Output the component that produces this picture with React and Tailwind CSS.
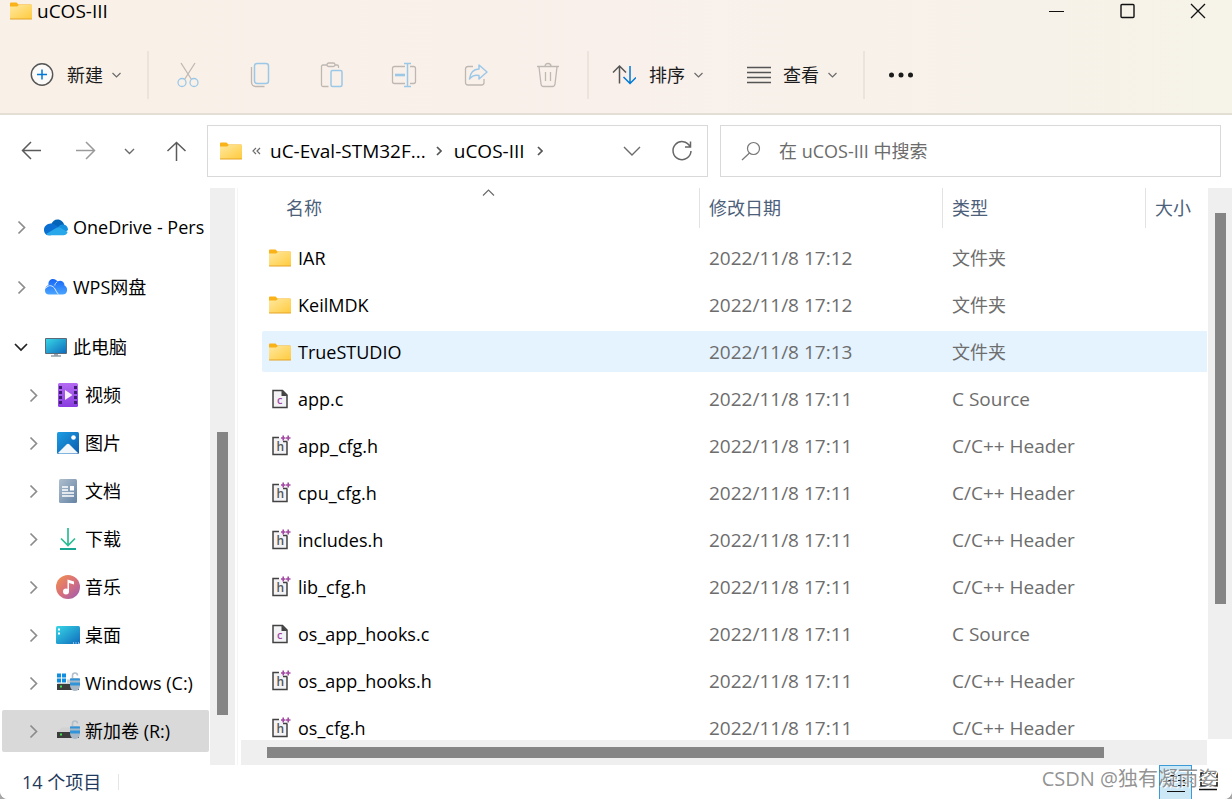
import React from "react";

const places = [
  { name: "视频", icon: VideoIcon },
  { name: "图片", icon: PictureIcon },
  { name: "文档", icon: DocumentIcon },
  { name: "下载", icon: DownloadIcon },
  { name: "音乐", icon: MusicIcon },
  { name: "桌面", icon: DesktopIcon },
  { name: "Windows (C:)", icon: SystemDriveIcon },
  { name: "新加卷 (R:)", icon: DriveIcon, selected: true },
];

const files = [
  { name: "IAR", date: "2022/11/8 17:12", type: "folder" },
  { name: "KeilMDK", date: "2022/11/8 17:12", type: "folder" },
  { name: "TrueSTUDIO", date: "2022/11/8 17:13", type: "folder", active: true },
  { name: "app.c", date: "2022/11/8 17:11", type: "c" },
  { name: "app_cfg.h", date: "2022/11/8 17:11", type: "h" },
  { name: "cpu_cfg.h", date: "2022/11/8 17:11", type: "h" },
  { name: "includes.h", date: "2022/11/8 17:11", type: "h" },
  { name: "lib_cfg.h", date: "2022/11/8 17:11", type: "h" },
  { name: "os_app_hooks.c", date: "2022/11/8 17:11", type: "c" },
  { name: "os_app_hooks.h", date: "2022/11/8 17:11", type: "h" },
  { name: "os_cfg.h", date: "2022/11/8 17:11", type: "h" },
];

const types = {
  folder: { label: "文件夹", icon: FolderIcon, size: "text-[18px]" },
  c: { label: "C Source", icon: CFileIcon, size: "text-[19px]" },
  h: { label: "C/C++ Header", icon: HFileIcon, size: "text-[19px]" },
};

/* ---------- icons ---------- */

function FolderIcon() {
  return (
    <svg width="22" height="18" viewBox="0 0 22 18" className="shrink-0">
      <defs>
        <linearGradient id="folder" x1="0" y1="0" x2="1" y2="1">
          <stop offset="0" stopColor="#ffe8a0" />
          <stop offset="1" stopColor="#ffcb3d" />
        </linearGradient>
      </defs>
      <path d="M0 1.5Q0 .5 1 .5H6.5L8.5 2.5H21Q22 2.5 22 3.5V8H0Z" fill="#f9b218" />
      <path d="M0 4.5H7L9 3H21.5Q22 3 22 3.5V17H0Z" fill="url(#folder)" />
      <path d="M0 16.5H22V17Q22 17.5 21 17.5H1Q0 17.5 0 17Z" fill="#e5a326" />
    </svg>
  );
}

function CFileIcon() {
  return (
    <svg width="22" height="24" viewBox="0 0 22 24" className="shrink-0">
      <path d="M4 3.5H13.5L18 8V20.5H4Z" fill="#f3f3f6" stroke="#424242" strokeWidth="1.5" />
      <path d="M12.5 3L18.5 9H12.5Z" fill="#424242" />
      <text x="8" y="17" fontSize="11" fontWeight="600" fill="#a349a4">c</text>
    </svg>
  );
}

function HFileIcon() {
  return (
    <svg width="22" height="24" viewBox="0 0 22 24" className="shrink-0">
      <path d="M4 4H18V20.5H4Z" fill="#f3f3f6" />
      <path d="M10 3.5H4V20.5H18V8M14 7.5H18.5" fill="none" stroke="#424242" strokeWidth="1.5" />
      <text x="7.5" y="17" fontSize="12" fontWeight="600" fill="#555">h</text>
      <path d="M12 4H16.5M14.2 1.5V6.500M17 4H21.500M19.200 1.500V6.500" stroke="#a349a4" strokeWidth="1.600" />
    </svg>
  );
}

function Chevron({ className = "", d = "M1 1L5.5 5.5L10 1", w = 11, h = 7, stroke = "#6b6b6b", weight = 1.2 }) {
  return (
    <svg width={w} height={h} viewBox={`0 0 ${w} ${h}`} className={`shrink-0 ${className}`} fill="none" stroke={stroke} strokeWidth={weight}>
      <path d={d} />
    </svg>
  );
}

function ExpandArrow() {
  return <Chevron d="M1.5 1.5L7.500 7.500L1.500 13.500" w={10} h={15} stroke="#8c8c8c" weight={1.7} />;
}

function MenuArrow() {
  return <Chevron d="M.5 1L4.500 5L8.500 1" w={9} h={6} />;
}

function OneDriveIcon() {
  return (
    <svg width="24" height="17" viewBox="0 0 24 17" className="shrink-0">
      <path d="M7 6C8 2.5 10.5.5 13.5.5C17 .5 19.5 3 20.3 6L14 10Z" fill="#0364b8" />
      <path d="M5.5 4.8C8.5 4 10.5 5.2 14.5 8L7 16.3H5C2 16.3 0 14 0 11C0 8 2 5.3 5.5 4.8Z" fill="#0a6fd0" />
      <path d="M14 8C16 5.5 18.5 5 20.2 5.8C22.5 6.2 24 8.2 24 11L20 14Z" fill="#1490df" />
      <path d="M2 15L13 8.6Q14.5 7.7 16.5 8.8L23.6 13Q22.5 16.3 19.3 16.3H5Q3.2 16.3 2 15Z" fill="#28a8ea" />
    </svg>
  );
}

function WpsCloudIcon() {
  return (
    <svg width="24" height="18" viewBox="0 0 24 18" className="shrink-0">
      <defs>
        <linearGradient id="wps" x1="0" y1="0" x2="0" y2="1">
          <stop offset="0" stopColor="#1565f5" />
          <stop offset="1" stopColor="#4aa5ff" />
        </linearGradient>
      </defs>
      <path d="M4.5 7C4 3.500 6 1 9 1C11 1 12.500 2 13.500 3.500C18 1.500 20.500 4.500 20.500 7.500C22.500 8.500 23.500 10.500 23 13C22.500 15.500 21 16.500 18.500 16.500H5C2.500 16.500 1 15 1 12.500C1 9.500 2.500 8 4.500 7Z" fill="url(#wps)" />
      <path d="M1.500 10.500C5 6 9 7.500 11 11C12 13 13 15 14.500 16.500M13 4C11.500 5 11 6 10.800 7.500" stroke="#dcebff" strokeWidth="1" fill="none" />
    </svg>
  );
}

function ComputerIcon() {
  return (
    <svg width="24" height="20" viewBox="0 0 24 20" className="shrink-0">
      <defs>
        <linearGradient id="screen" x1="0" y1="0" x2="1" y2="1">
          <stop offset="0" stopColor="#37d6e6" />
          <stop offset="1" stopColor="#0f6cbd" />
        </linearGradient>
      </defs>
      <rect x="1" y="1" width="22" height="16" rx="1" fill="#5b6a78" />
      <rect x="2" y="2" width="20" height="14" fill="url(#screen)" />
      <path d="M10 17H14V18.500H10Z" fill="#9aa7b3" />
      <path d="M7 18.500H17V19.500H7Z" fill="#5b6a78" />
    </svg>
  );
}

function VideoIcon() {
  return (
    <svg width="24" height="24" viewBox="0 0 24 24" className="shrink-0">
      <defs>
        <linearGradient id="video" x1="0" y1="0" x2="0" y2="1">
          <stop offset="0" stopColor="#b46bf2" />
          <stop offset="1" stopColor="#8a3de0" />
        </linearGradient>
      </defs>
      <rect x="2" width="20" height="24" rx="1.500" fill="url(#video)" />
      <path d="M4.500 3V22M19.500 3V22" stroke="#3f1d73" strokeWidth="3" strokeDasharray="3 2" />
      <path d="M9 7L16.500 12L9 17Z" fill="#f6f0fc" />
    </svg>
  );
}

function PictureIcon() {
  return (
    <svg width="24" height="24" viewBox="0 0 24 24" className="shrink-0">
      <defs>
        <linearGradient id="picture" x1="0" y1="0" x2="1" y2="1">
          <stop offset="0" stopColor="#1c9de4" />
          <stop offset="1" stopColor="#0b5cad" />
        </linearGradient>
      </defs>
      <rect x="1" y="1" width="22" height="22" rx="1.500" fill="url(#picture)" />
      <circle cx="17.500" cy="6.500" r="2.300" fill="#fff" />
      <path d="M2 22L10.500 13.500Q12 12 13.500 13.500L22 22Q21.500 22.500 21 22.500H3Z" fill="#f2f7fc" />
    </svg>
  );
}

function DocumentIcon() {
  return (
    <svg width="24" height="24" viewBox="0 0 24 24" className="shrink-0">
      <defs>
        <linearGradient id="document" x1="0" y1="0" x2="1" y2="1">
          <stop offset="0" stopColor="#aebfcd" />
          <stop offset="1" stopColor="#6583a5" />
        </linearGradient>
      </defs>
      <rect x="3" width="18" height="24" rx="1.500" fill="url(#document)" />
      <path d="M6 8H12M6 11H12M6 14H18M6 17H18" stroke="#fff" strokeWidth="1.300" />
      <rect x="14" y="7" width="4" height="4.500" fill="#fff" />
    </svg>
  );
}

function DownloadIcon() {
  return (
    <svg width="24" height="24" viewBox="0 0 24 24" fill="none" className="shrink-0">
      <path d="M12 1V18M5 11.500L12 18.500L19 11.500" stroke="#2bbd93" strokeWidth="1.700" />
      <path d="M4 22H20" stroke="#17a68f" strokeWidth="2" />
    </svg>
  );
}

function MusicIcon() {
  return (
    <svg width="24" height="24" viewBox="0 0 24 24" className="shrink-0">
      <defs>
        <linearGradient id="music" x1="0" y1="0" x2="1" y2="1">
          <stop offset="0" stopColor="#f2934a" />
          <stop offset=".5" stopColor="#d9707a" />
          <stop offset="1" stopColor="#9a5bb5" />
        </linearGradient>
      </defs>
      <circle cx="12" cy="12" r="12" fill="url(#music)" />
      <circle cx="10" cy="16.500" r="3" fill="#fff" />
      <path d="M11.500 4.500L18 6.500V9.500L13 8V16.500H11.500Z" fill="#fff" />
    </svg>
  );
}

function DesktopIcon() {
  return (
    <svg width="24" height="20" viewBox="0 0 24 20" className="shrink-0">
      <rect y="1" width="24" height="18" rx="1.500" fill="url(#screen)" />
      <path d="M2 3.500H4V5.500H2ZM2 7.500H4V9.500H2Z" fill="#fff" />
      <path d="M17 18H18M19.500 18H20.500M22 18H23" stroke="#fff" strokeWidth="1" />
    </svg>
  );
}

function DriveBody() {
  return (
    <>
      <path d="M6 7.500H20L23 12H1Z" fill="#d2d2d2" />
      <rect x="1" y="12" width="22" height="6" fill="#3c3c3c" />
      <rect x="4" y="13.500" width="2" height="2" fill="#3ce24b" />
      <path d="M16.500 7V3.500Q16.500 1 19 1Q21.500 1 21.500 3.500" fill="none" stroke="#b4bfca" strokeWidth="1.600" />
      <path d="M14 8Q14 6 16 6H22Q24 6 24 8V14Q23 19 19 19Q15 19 14 14Z" fill="#a9b8c6" />
      <path d="M14 6.500H24V8.500H14ZM14 10.500H24V13.500H14Z" fill="#3293d8" />
    </>
  );
}

function SystemDriveIcon() {
  return (
    <svg width="24" height="22" viewBox="0 0 24 22" className="shrink-0">
      <DriveBody />
      <path d="M0 0H11V11H0Z" fill="#fff" />
      <path d="M1 1.500H5V5.500H1ZM6 1.500H10V5.500H6ZM1 6.500H5V10.500H1ZM6 6.500H10V10.500H6Z" fill="#0f8de0" />
    </svg>
  );
}

function DriveIcon() {
  return (
    <svg width="24" height="22" viewBox="0 0 24 22" className="shrink-0">
      <DriveBody />
    </svg>
  );
}

/* Shared frame for the greyed out toolbar icons */
function ToolIcon({ children }) {
  return (
    <svg width="26" height="26" viewBox="0 0 26 26" fill="none" stroke="#bfb8b2" strokeWidth="1.300">
      {children}
    </svg>
  );
}

const tools = [
  {
    label: "剪切",
    icon: (
      <>
        <path d="M6 1L16.500 17.500M20 1L9.500 17.500" />
        <circle cx="7" cy="20.500" r="4" stroke="#9cc8e8" />
        <circle cx="19" cy="20.500" r="4" stroke="#9cc8e8" />
      </>
    ),
  },
  {
    label: "复制",
    icon: (
      <>
        <path d="M4.500 5V20Q4.500 24.500 9 24.500H17.500" />
        <rect x="7.500" y="1.500" width="14" height="20" rx="2.500" stroke="#9cc8e8" strokeWidth="1.500" />
      </>
    ),
  },
  {
    label: "粘贴",
    icon: (
      <>
        <path d="M8 3H4Q2.500 3 2.500 4.500V23Q2.500 24.500 4 24.500H9.500M16 3H18Q19.500 3 19.500 4.500V6" />
        <rect x="8" y="1" width="8" height="3.500" rx="1.700" />
        <rect x="12" y="8.500" width="11" height="16" rx="1.500" stroke="#9cc8e8" strokeWidth="1.500" />
      </>
    ),
  },
  {
    label: "重命名",
    icon: (
      <>
        <path d="M14 4.500H3.500Q1.500 4.500 1.500 6.500V19.500Q1.500 21.500 3.500 21.500H14M19 4.500H22.500Q24.500 4.500 24.500 6.500V19.500Q24.500 21.500 22.500 21.500H19" />
        <path d="M13 1.500H20M16.500 1.500V24.500M13 24.500H20" stroke="#9cc8e8" strokeWidth="1.500" />
        <path d="M4 13H14" stroke="#9cc8e8" strokeWidth="2.600" />
      </>
    ),
  },
  {
    label: "共享",
    icon: (
      <>
        <path d="M10 4.500H5Q2.500 4.500 2.500 7V20.500Q2.500 23 5 23H18.500Q21 23 21 20.500V17" />
        <path d="M16 3L24 10L16 17V13.500Q10 12.500 6.500 17Q7.500 7.500 16 7Z" stroke="#9cc8e8" strokeWidth="1.500" strokeLinejoin="round" />
      </>
    ),
  },
  {
    label: "删除",
    icon: (
      <>
        <path d="M2 4.500H24M4 5L6 22Q6.300 24.500 8.500 24.500H17.500Q19.700 24.500 20 22L22 5M10 4.500Q10 1.500 13 1.500Q16 1.500 16 4.500" />
        <path d="M10.500 10V19M15.500 10V19" />
      </>
    ),
  },
];

/* ---------- window parts ---------- */

function TitleBar() {
  return (
    <div className="flex h-[22px] items-center pl-2.5">
      <FolderIcon />
      <h1 className="ml-[5px] grow text-[19px] leading-6">uCOS-III</h1>
      <div className="flex">
        <button aria-label="最小化" className="flex w-[70px] justify-center">
          <svg width="16" height="16"><path d="M0 8.500H15" stroke="#111" /></svg>
        </button>
        <button aria-label="最大化" className="flex w-[72px] justify-center">
          <svg width="16" height="16"><rect x="1" y="1.500" width="13" height="13" rx="1" fill="none" stroke="#111" strokeWidth="1.400" /></svg>
        </button>
        <button aria-label="关闭" className="flex w-[68px] justify-center">
          <svg width="16" height="16"><path d="M1 1L15 15M15 1L1 15" stroke="#111" strokeWidth="1.300" /></svg>
        </button>
      </div>
    </div>
  );
}

function Divider() {
  return <div className="h-12 w-0.5 bg-[#ebe4dc]" />;
}

function Toolbar() {
  return (
    <div className="mt-[15px] flex h-[76px] items-center pl-[30px] text-[18px] text-[#1b1b1b]">
      <button className="flex items-center">
        <svg width="24" height="24" viewBox="0 0 24 24">
          <circle cx="12" cy="11.500" r="10.700" fill="#fcfaf8" stroke="#555" strokeWidth="1.400" />
          <path d="M12 6.500V16.500M7 11.500H17" stroke="#0078d4" strokeWidth="1.500" />
        </svg>
        <span className="ml-[13px] mr-[9px]">新建</span>
        <MenuArrow />
      </button>
      <div className="ml-[26px] mr-[3px]"><Divider /></div>
      {tools.map((tool) => (
        <button key={tool.label} aria-label={tool.label} className="flex w-[72px] justify-center" disabled>
          <ToolIcon>{tool.icon}</ToolIcon>
        </button>
      ))}
      <div className="ml-[3px] mr-[23px]"><Divider /></div>
      <button className="flex items-center">
        <svg width="24" height="24" viewBox="0 0 24 24" fill="none" strokeWidth="1.500">
          <path d="M7.500 20.500V3M1 9.500L7.500 3L14 9.500" stroke="#555" />
          <path d="M18 3V20.500M11.500 14L18 20.500L24 14.500" stroke="#0078d4" />
        </svg>
        <span className="ml-[13px] mr-[9px]">排序</span>
        <MenuArrow />
      </button>
      <button className="ml-11 flex items-center">
        <svg width="24" height="24" viewBox="0 0 24 24">
          <path d="M0 4.500H24M0 9.500H24M0 14.500H24M0 19.500H24" stroke="#555" strokeWidth="1.300" />
        </svg>
        <span className="ml-3 mr-[9px]">查看</span>
        <MenuArrow />
      </button>
      <div className="ml-[26px] mr-6"><Divider /></div>
      <button aria-label="更多">
        <svg width="24" height="6" viewBox="0 0 24 6" fill="#1b1b1b">
          <circle cx="2.500" cy="3" r="2.500" />
          <circle cx="12" cy="3" r="2.500" />
          <circle cx="21.500" cy="3" r="2.500" />
        </svg>
      </button>
    </div>
  );
}

function AddressBar() {
  return (
    <div className="grid shrink-0 grid-cols-[195px_1fr_1fr] items-center gap-3 bg-white pb-[11px] pr-[11px] pt-2.5">
      <nav className="flex items-center pl-[21px]">
        <button aria-label="后退">
          <svg width="20" height="20" fill="none" stroke="#5a5a5a" strokeWidth="1.500"><path d="M20 9.500H1.500M10 1L1.500 9.500L10 18" /></svg>
        </button>
        <button aria-label="前进" className="ml-[35px]">
          <svg width="20" height="20" fill="none" stroke="#9a9a9a" strokeWidth="1.500"><path d="M0 9.500H18.500M10 1L18.500 9.500L10 18" /></svg>
        </button>
        <button aria-label="最近浏览的位置" className="ml-7"><Chevron weight={1.4} /></button>
        <button aria-label="上移" className="ml-[31px]">
          <svg width="20" height="22" fill="none" stroke="#5a5a5a" strokeWidth="1.500"><path d="M10.500 21V2.500M1.500 11L10.500 2.500L19.500 11" /></svg>
        </button>
      </nav>
      <div className="flex h-[52px] items-center whitespace-nowrap border border-[#d9d9d9] pl-3 pr-[14px] text-[19px]">
        <FolderIcon />
        <Chevron className="ml-2.5" d="M4 1L1 4L4 7M8 1L5 4L8 7" w={9} h={8} />
        <button className="ml-[9px]">uC-Eval-STM32F...</button>
        <Chevron className="ml-2.5" d="M1 1L5 5L1 9" w={6} h={10} stroke="#555" weight={1.7} />
        <button className="ml-3">uCOS-III</button>
        <Chevron className="ml-3" d="M1 1L5 5L1 9" w={6} h={10} stroke="#555" weight={1.7} />
        <button aria-label="展开" className="ml-auto"><Chevron d="M1 1L9 9L17 1" w={18} h={11} weight={1.4} /></button>
        <button aria-label="刷新" className="ml-[30px]">
          <svg width="22" height="22" viewBox="0 0 22 22" fill="none" stroke="#666" strokeWidth="1.500">
            <path d="M19 6.500A9 9 0 1 0 20 11M19.500 1.500V7H14" />
          </svg>
        </button>
      </div>
      <label className="flex h-[52px] items-center border border-[#d9d9d9] pl-5">
        <svg width="20" height="20" fill="none" stroke="#777" strokeWidth="1.200" className="shrink-0">
          <circle cx="12.500" cy="7.500" r="6" />
          <path d="M8.500 12L1 19" />
        </svg>
        <input type="text" aria-label="搜索" placeholder="在 uCOS-III 中搜索" className="ml-[18px] w-full bg-transparent text-[18px] outline-none placeholder:text-[#6b6b6b]" />
      </label>
    </div>
  );
}

function Sidebar() {
  return (
    <aside className="flex w-[235px] shrink-0">
      <div className="w-[210px] overflow-hidden whitespace-nowrap pl-0.5 pr-px pt-[18px] text-[18px]">
        <button className="mb-[18px] flex h-[42px] w-full items-center pl-[15px]">
          <ExpandArrow />
          <span className="ml-[17px]"><OneDriveIcon /></span>
          <span className="ml-[5px]">OneDrive - Pers</span>
        </button>
        <button className="mb-[18px] flex h-[42px] w-full items-center pl-[15px]">
          <ExpandArrow />
          <span className="ml-[17px]"><WpsCloudIcon /></span>
          <span className="ml-[5px]">WPS网盘</span>
        </button>
        <button className="mb-1.5 flex h-[42px] w-full items-center pl-3">
          <Chevron d="M1 1L7 7L13 1" w={14} h={9} stroke="#222" weight={1.7} />
          <span className="ml-4"><ComputerIcon /></span>
          <span className="ml-[5px]">此电脑</span>
        </button>
        {places.map(({ name, icon: Icon, selected }) => (
          <button key={name} className={`mb-1.5 flex h-[42px] w-full items-center rounded-xs pl-[27px] ${selected ? "bg-[#d9d9d9]" : ""}`}>
            <ExpandArrow />
            <span className="ml-[17px]"><Icon /></span>
            <span className="ml-[5px]">{name}</span>
          </button>
        ))}
      </div>
      <div className="flex w-[25px] flex-col items-center bg-[#efefef]">
        <div className="grow-[244]" />
        <div className="w-[11px] grow-[283] bg-[#858585]" />
        <div className="grow-[50]" />
      </div>
    </aside>
  );
}

function FileList() {
  return (
    <div className="relative min-h-0 grow overflow-hidden pl-[21px] pr-px">
      <table className="w-full table-fixed text-left text-[18px]">
        <colgroup>
          <col />
          <col className="w-[243px]" />
          <col className="w-[203px]" />
          <col className="w-[62px]" />
        </colgroup>
        <thead>
          <tr className="h-[46px] align-top text-[#4c607a]">
            <th className="p-0 font-normal"><div className="h-10 pl-6 leading-10">名称</div></th>
            <th className="p-0 font-normal"><div className="h-10 border-l border-[#e2e2e2] pl-[9px] leading-10">修改日期</div></th>
            <th className="p-0 font-normal"><div className="h-10 border-l border-[#e2e2e2] pl-[9px] leading-10">类型</div></th>
            <th className="p-0 font-normal"><div className="h-10 border-l border-[#e2e2e2] pl-[9px] leading-10">大小</div></th>
          </tr>
        </thead>
        <tbody>
          {files.map((file) => {
            const { label, icon: Icon, size } = types[file.type];
            const cell = `flex h-[41px] items-center ${file.active ? "bg-[#e5f3ff]" : ""}`;
            return (
              <tr key={file.name} className="h-[47px]">
                <td className="p-0">
                  <div className={`${cell} gap-[7px] rounded-l-xs pl-[7px]`}>
                    <Icon />
                    <span className="pt-0.5">{file.name}</span>
                  </div>
                </td>
                <td className="p-0 text-[19px] text-[#6d6d6d]"><div className={`${cell} pl-2.5 pt-0.5`}>{file.date}</div></td>
                <td className={`p-0 text-[#6d6d6d] ${size}`}><div className={`${cell} pl-2.5 pt-0.5`}>{label}</div></td>
                <td className="p-0"><div className={cell} /></td>
              </tr>
            );
          })}
        </tbody>
      </table>
      {/* sort direction marker above the name column */}
      <Chevron className="absolute left-[241px] top-px" d="M1 6.500L6.500 1L12 6.500" w={13} h={8} />
    </div>
  );
}

function StatusBar() {
  return (
    <footer className="relative flex h-[34px] shrink-0 items-center bg-white pl-[22px] text-[18px] text-[#1e395b]">
      <span>14 个项目</span>
      <div className="ml-[17px] h-4 w-px bg-[#e5e5e5]" />
      <div className="ml-auto flex h-full items-center pr-2">
        <button aria-label="详细信息" className="flex h-full w-[33px] items-center justify-center border border-b-0 border-[#3a9bd5] bg-[#cce8f6]">
          <svg width="20" height="22" stroke="#111" strokeWidth="1.200" fill="none">
            <path d="M2 3.500H8M12 3.500H19M2 8.500H8M12 8.500H19M2 13.500H8M12 13.500H19M1 19.500H19" />
          </svg>
        </button>
        <button aria-label="大图标" className="flex h-full w-8 items-center justify-center">
          <svg width="20" height="22" stroke="#111" strokeWidth="1.500" fill="none">
            <rect x="3" y="2" width="16" height="13" />
            <path d="M1 18.500H19" />
          </svg>
        </button>
      </div>
      <span className="pointer-events-none absolute bottom-1.5 right-3.5 whitespace-nowrap text-[20px] leading-7 text-[#777]/80 [text-shadow:1px_1px_0_#fff]">CSDN @独有凝雨姿</span>
    </footer>
  );
}

const App = () => {
  return (
    <div className="h-screen bg-[#a6a6a6] font-['Open_Sans','Noto_Sans_CJK_SC',sans-serif] text-black">
      <div className="flex h-full flex-col overflow-hidden rounded-b-lg bg-white">
        <header className="shrink-0 border-b-2 border-[#e3dfd5] bg-linear-to-r from-[#f9f1e7] via-[#f9f0eb] to-[#f6f3e8]">
          <TitleBar />
          <Toolbar />
        </header>

        <AddressBar />

        <main className="flex min-h-0 grow">
          <Sidebar />
          <div className="ml-0.5 mr-[3px] w-px shrink-0 bg-[#f5f5f5]" />

          <section className="flex min-w-0 grow flex-col">
            <FileList />
            <div className="mr-px flex h-[25px] shrink-0 items-center bg-[#efefef]">
              <div className="grow-[26]" />
              <div className="h-[11px] grow-[837] bg-[#858585]" />
              <div className="grow-[103]" />
            </div>
          </section>

          <div className="mb-[26px] flex w-6 shrink-0 flex-col items-center bg-[#efefef]">
            <div className="grow-[25]" />
            <div className="w-[11px] grow-[391] bg-[#858585]" />
            <div className="grow-[135]" />
          </div>
        </main>

        <StatusBar />
      </div>
    </div>
  );
};

export default App;
